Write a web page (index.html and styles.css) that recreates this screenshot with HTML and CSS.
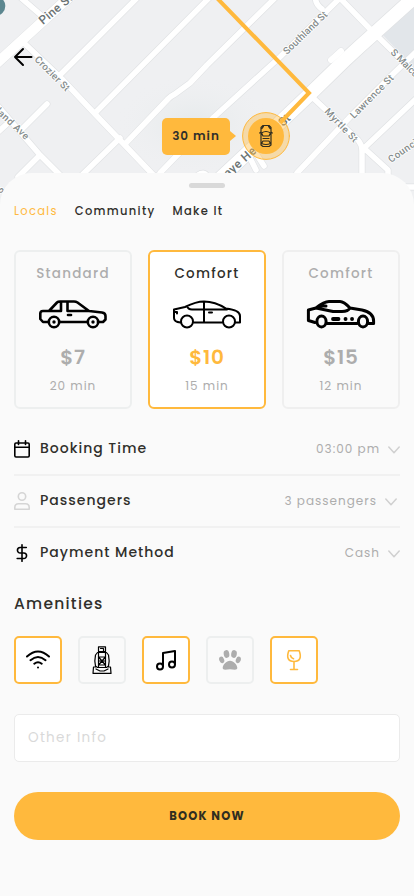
FILE: index.html
```html
<!DOCTYPE html>
<html lang="en">
<head>
<meta charset="utf-8">
<meta name="viewport" content="width=device-width, initial-scale=1">
<title>Book a ride</title>
<link rel="stylesheet" href="styles.css">
</head>
<body>
<main class="screen">
  <section class="map">
    <svg class="map-art" width="414" height="210" viewBox="0 0 414 210">
      <defs>
        <radialGradient id="glow"><stop offset="0" stop-color="#e4e9ea"/><stop offset="1" stop-color="#eff0f2" stop-opacity="0"/></radialGradient>
        <g id="roads">
          <path d="M20-3 42 16M23 42 62 79 95 114 118 138 160 182M60 75 138-3M95 113 211-4M126 143 168 99Q171 96 175 94L190 83 207 65 275-2M160 173 214 117 280 57 342-4M120 138 80 177M-3 105 40 155 62 177M40 155 18 177M-3 133 8 123M338-4 371 30 414 72M297 173 350 117 394 73 418 50M310 95 358 140Q362 145 362 150V178M362 150 418 97M366 150 388 170V180M396 187H418"/>
          <path class="thin" d="M47 104 22 129M250 158 256 170M257 155 264 166M316-4Q314 3 322 9M198 175Q204 171 207 176"/>
        </g>
        <path id="avenue" d="M210 188 270 132 310 94 345 60Q360 46 377 31L418-6"/>
        <path id="bump" d="M331 60 341 51"/>
        <path id="pine" d="M-4 64 42 22 75-8"/>
      </defs>
      <path class="land" d="M0 0H414V210H0z"/>
      <ellipse cx="195" cy="125" rx="80" ry="50" fill="url(#glow)"/>
      <path class="park" d="M382 34 418 2V72z"/>
      <g class="casing"><use href="#roads"/><use class="avenue" href="#avenue"/><use class="bump" href="#bump"/><use class="pine" href="#pine"/></g>
      <g class="road"><use href="#roads"/><use class="avenue" href="#avenue"/><use class="bump" href="#bump"/><use class="pine" href="#pine"/></g>
      <circle class="poi" cx="-4.500" cy="6" r="9.800"/>
      <g class="street">
        <text class="major" transform="translate(43 25) rotate(-40)" textLength="40">Pine St</text>
        <text transform="translate(34 60) rotate(45)" textLength="45">Crozier St</text>
        <text transform="translate(-9 108) rotate(43)" textLength="47">oland Ave</text>
        <text transform="translate(287 55) rotate(-44)" textLength="57">Southland St</text>
        <text transform="translate(324 112) rotate(46)" textLength="43">Myrtle St</text>
        <text transform="translate(354 119) rotate(-45)" textLength="57">Lawrence St</text>
        <text transform="translate(390 53) rotate(45)" textLength="58">S Malcolm St</text>
        <text transform="translate(391 163) rotate(-35)" textLength="36">Council</text>
        <text class="major" transform="translate(228 178) rotate(-42)" textLength="39">aye He</text>
        <text class="major" transform="translate(283 127) rotate(-43)">St</text>
        <text transform="translate(1 194) rotate(-55)">S</text>
      </g>
      <path class="route" d="M215-4 309 93 280 123"/>
      <circle class="marker-ring" cx="266" cy="136" r="23.4"/>
      <circle class="marker" cx="266" cy="136" r="18"/>
      <g class="taxi">
        <path d="M263 125.500h6l2 2v17.500l-2 1.500h-6l-2-1.500v-17.500zM261.500 133q4.500-3 9 0l-1.500 3h-6zM263 138.500h6M261.500 143.500q4.500 2 9 0l-1.500-2.500h-6zM261 132l-1.300 1M271 132l1.300 1M262 128.500l1.500-2M270 128.500l-1.500-2"/>
      </g>
    </svg>
    <svg class="back" width="20" height="20" viewBox="0 0 20 20"><path d="M18.500 10H2M10 2 2 10l8 8"/></svg>
    <div class="eta">30 min</div>
  </section>

  <section class="sheet">
    <div class="handle"></div>
    <nav class="tabs"><span class="tab active">Locals</span><span class="tab">Community</span><span class="tab">Make It</span></nav>

    <div class="cards">
      <article class="card cool">
        <h3>Standard</h3>
        <svg class="car" width="70" height="30" viewBox="0 0 70 30"><g stroke-width="2.600">
          <path d="M9.500 23H5L2.300 20V14.500Q2.300 12 5 12H11L19 3.500Q20 2.500 22 2.500H36Q38 2.500 39.500 3.500L51 12 64 13.500Q67.500 14 67.500 17V20.500L65 23H60M22 23H49M11 12H23V3M29.500 3V12H51"/><circle cx="16" cy="23" r="5.200"/><circle cx="55" cy="23" r="5.200"/><path d="M30 16h3"/></g><circle cx="16" cy="23" r="1.700" fill="#000" stroke="none"/><circle cx="55" cy="23" r="1.700" fill="#000" stroke="none"/></svg>
        <strong>$7</strong><small>20 min</small>
      </article>
      <article class="card selected">
        <h3>Comfort</h3>
        <svg class="car" width="70" height="30" viewBox="0 0 70 30"><g stroke-width="2">
          <path d="M8.500 23.500Q2 23 2 19V10.500L13 8Q24 2.500 32 2.500 43 2.500 54 9.500 68 11 68 17V23.500H63M22 23.500H50M32 2.500V23.500M15 7Q16 10.500 20 10.500H55M2 13H5V14.500M37 13.500H40"/><circle cx="15" cy="22.500" r="6"/><circle cx="57" cy="22.500" r="6"/></g></svg>
        <strong>$10</strong><small>15 min</small>
      </article>
      <article class="card">
        <h3>Comfort</h3>
        <svg class="car" width="70" height="30" viewBox="0 0 70 30"><g stroke-width="3">
          <path d="M9 23.500 2.400 21.500V11L10 9Q18 2.500 23 2.500H34Q38 2.500 44 9L56 11Q67.600 13.500 67.600 22V24.500H62M21 24.500H51M2.400 11 10 9 27 12.500H36Q42 12.500 44 9M10 9 14 7H20"/><ellipse cx="15.500" cy="22.500" rx="4.600" ry="5.400"/><ellipse cx="57" cy="22.500" rx="4.600" ry="5.400"/></g><path stroke-width="3.800" d="M27 20h5.500M39.500 20h.1M46 20h.1"/></svg>
        <strong>$15</strong><small>12 min</small>
      </article>
    </div>

    <div class="rows">
      <div class="row">
        <svg class="row-icon" width="16" height="18" viewBox="0 0 16 18"><path d="M2 3h12q1.200 0 1.200 1.200v11.600q0 1.200-1.200 1.200H2Q.8 17 .8 15.800V4.200Q.8 3 2 3zM1 7.300h14M4.500.8v3.700M11.500.8v3.700"/></svg>
        <span class="label">Booking Time</span><span class="value">03:00 pm</span>
        <svg class="chev" width="12" height="8" viewBox="0 0 12 8"><path d="M.8 1 6 6.800 11.200 1"/></svg>
      </div>
      <div class="row row-people">
        <svg class="row-icon pale" width="16" height="18" viewBox="0 0 16 18"><circle cx="8" cy="4.500" r="3.700"/><path d="M.8 17.200v-1.700q0-3.700 3.700-3.700h7q3.700 0 3.700 3.700v1.700z"/></svg>
        <span class="label">Passengers</span><span class="value">3 passengers</span>
        <svg class="chev" width="12" height="8" viewBox="0 0 12 8"><path d="M.8 1 6 6.800 11.200 1"/></svg>
      </div>
      <div class="row">
        <svg class="row-icon" width="16" height="18" viewBox="0 0 16 18"><path d="M8 .8v16.500M12.300 3.500H6.200a2.750 2.750 0 0 0 0 5.500h3.600a2.750 2.750 0 0 1 0 5.500H3.200"/></svg>
        <span class="label">Payment Method</span><span class="value">Cash</span>
        <svg class="chev" width="12" height="8" viewBox="0 0 12 8"><path d="M.8 1 6 6.800 11.200 1"/></svg>
      </div>
    </div>

    <h2>Amenities</h2>
    <div class="amenities">
      <div class="amenity on"><svg width="24" height="24" viewBox="0 0 24 24" stroke-width="2"><path d="M1 8.500Q12-1.500 23 8.500M4.500 12.200q7.500-6.500 15 0M8.300 15.700q3.700-3 7.400 0M12 19.500h.01"/></svg></div>
      <div class="amenity cool"><svg width="20" height="28" viewBox="0 0 20 28" stroke-width="1.200"><path d="M6.500.8h7v4.700h-7zM8.500 2.500h3v3M5.500 6.500h9l2 2.500q1.300 6 0 11l-2 1.500h-9l-2-1.500Q2.200 15 3.500 9zM6.500 7v14M13.500 7v14M6.500 11h7M6.500 15h7M6.500 19h7M7 11.500l6 7M13 11.500l-6 7M3.500 21H1.500L1 27.400h18L18.500 21H16.500M4 23l4 2h4l4-2"/></svg></div>
      <div class="amenity on"><svg width="22" height="22" viewBox="0 0 22 22" stroke-width="2"><path d="M8 17V4L20 2V15"/><circle cx="5" cy="17.500" r="3"/><circle cx="17" cy="15.500" r="3"/></svg></div>
      <div class="amenity cool"><svg width="22" height="22" viewBox="0 0 22 22" class="paw"><ellipse cx="7.500" cy="5" rx="2.800" ry="3.900" transform="rotate(-10 7.500 5)"/><ellipse cx="15" cy="5" rx="2.800" ry="3.900" transform="rotate(10 15 5)"/><ellipse cx="2.700" cy="10.800" rx="2.400" ry="3.400" transform="rotate(-22 2.700 10.800)"/><ellipse cx="19.300" cy="10.800" rx="2.400" ry="3.400" transform="rotate(22 19.300 10.800)"/><path d="M11 11.800c-3.600 0-7.300 4.200-7.300 7 0 3 3.900 1.500 7.300 1.500s7.300 1.500 7.300-1.500c0-2.800-3.700-7-7.300-7z"/></svg></div>
      <div class="amenity on"><svg width="16" height="22" viewBox="0 0 16 22" class="glass"><path d="M2.800 1.700h10.400Q17 12 8 12.500-1 12 2.800 1.700zM8 12.500v8M4.500 20.500h7M4.500 6.500q.5 2.500 3 3.200"/></svg></div>
    </div>

    <input class="note" type="text" placeholder="Other Info">
    <button class="book" type="button">BOOK NOW</button>
  </section>
</main>
</body>
</html>
```
FILE: styles.css
```css
* { box-sizing: border-box; }
body { margin: 0; background: #fafafa; font-family: Poppins, Inter, sans-serif; color: #302f2b; }
h2, h3 { margin: 0; font-weight: 500; }
svg { display: block; flex: none; fill: none; stroke-linecap: round; stroke-linejoin: round; }
.screen { width: 414px; height: 896px; overflow: hidden; }

.map { position: relative; height: 173px; }
.land { fill: #eff0f2; }
.park { fill: #e2e6ea; }
.casing { stroke: #e0e2e4; stroke-width: 6.800; }
.road { stroke: #fff; stroke-width: 5.500; }
.casing .thin { stroke-width: 5; }
.road .thin { stroke-width: 3.800; }
.casing .avenue { stroke-width: 15; }
.road .avenue { stroke-width: 13.500; }
.casing .bump { stroke-width: 7; }
.road .bump { stroke-width: 6; }
.casing .pine { stroke-width: 11; }
.road .pine { stroke-width: 10; }
.poi { fill: #5c8790; }
.street { font: 500 9.800px Roboto, sans-serif; fill: #858c8c; stroke: #fff; stroke-width: 1.500px; paint-order: stroke; }
.street .major { font-size: 12px; fill: #6b7374; }
.route { stroke: #ffb93d; stroke-width: 4; stroke-linecap: butt; stroke-linejoin: miter; }
.marker-ring { fill: #ffb93d66; stroke: #ffb93d; stroke-width: 1; }
.marker { fill: #ffb93d; }
.taxi { stroke: #302d20; stroke-width: 1.200; }
.back { position: absolute; left: 13px; top: 47px; stroke: #000; stroke-width: 2; }
.eta { position: absolute; left: 162px; top: 118px; width: 68px; height: 37px; border-radius: 5px; background: #ffb93d; font-size: 12px; line-height: 36px; font-weight: 600; letter-spacing: 1px; text-align: center; }
.eta::after { content: ""; position: absolute; left: 68px; top: 13px; border: 5px solid transparent; border-left: 6px solid #ffb93d; border-right: 0; }

.sheet { position: relative; display: flex; flex-direction: column; height: 723px; padding: 10px 14px 0; border-radius: 32px 32px 0 0; background: #fafafa; }
.handle { width: 36px; height: 5px; border-radius: 3px; background: #d9d9d9; align-self: center; }
.tabs { display: flex; gap: 17px; margin-top: 15px; height: 16px; font-size: 11.500px; line-height: 16px; letter-spacing: 1.300px; font-weight: 500; }
.active { color: #ffb93d; font-weight: 400; }

.cards { display: flex; gap: 16px; margin-top: 31px; }
.card { display: flex; flex-direction: column; align-items: center; width: 118px; height: 159px; padding-top: 12px; border: 2px solid #efefef; border-radius: 6px; color: #adadad; }
.card.cool { border-color: #edefef; }
.card h3 { font-size: 13.500px; line-height: 20px; letter-spacing: 1.250px; }
.car { margin-top: 15px; stroke: #000; }
.card strong { margin-top: 16px; font-size: 20px; line-height: 24px; font-weight: 600; letter-spacing: .7px; }
.card small { margin-top: 8px; font-size: 12px; line-height: 18px; letter-spacing: 1px; }
.selected { border-color: #ffb93d; background: #fff; }
.selected h3 { color: #302f2b; }
.selected strong { color: #ffb93d; }

.rows { margin-top: 15px; }
.row { display: flex; align-items: center; height: 52px; border-bottom: 2px solid #f1f1f1; }
.row:last-child { border-color: transparent; }
.row-people { padding-right: 3px; }
.row-icon { stroke: #000; stroke-width: 1.600; }
.pale { stroke: #d5d5d5; }
.label { margin-left: 10px; font-size: 14px; line-height: 20px; font-weight: 500; letter-spacing: 1px; transform: translateY(-1px); }
.value { margin-left: auto; font-size: 12px; line-height: 18px; letter-spacing: 1px; color: #adadad; }
.chev { margin: 2px 0 0 8px; stroke: #d0d0d0; stroke-width: 1.500; }

h2 { margin-top: 12px; font-size: 15.500px; line-height: 24px; letter-spacing: 1.250px; }
.amenities { display: flex; gap: 16px; margin-top: 20px; }
.amenity { display: flex; align-items: center; justify-content: center; width: 48px; height: 48px; border: 2px solid #efefef; border-radius: 5px; stroke: #000; }
.amenity.cool { border-color: #edefef; }
.amenity.on { border-color: #ffb93d; background: #fff; }
.paw { fill: #adadad; stroke: none; }
.glass { stroke: #ffb93d; stroke-width: 1.600; }

.note { width: 100%; height: 48px; margin-top: 30px; padding: 0 13px; border: 1px solid #ebebeb; border-radius: 5px; background: #fff; font: 400 13.500px Poppins, Inter, sans-serif; letter-spacing: 1.300px; }
.note::placeholder { color: #d9d9d9; opacity: 1; }
.book { height: 48px; margin-top: 30px; padding: 0; border: 0; border-radius: 24px; background: #ffb93d; color: #302d20; font: 700 11.500px Poppins, Inter, sans-serif; letter-spacing: 1.200px; }
```
